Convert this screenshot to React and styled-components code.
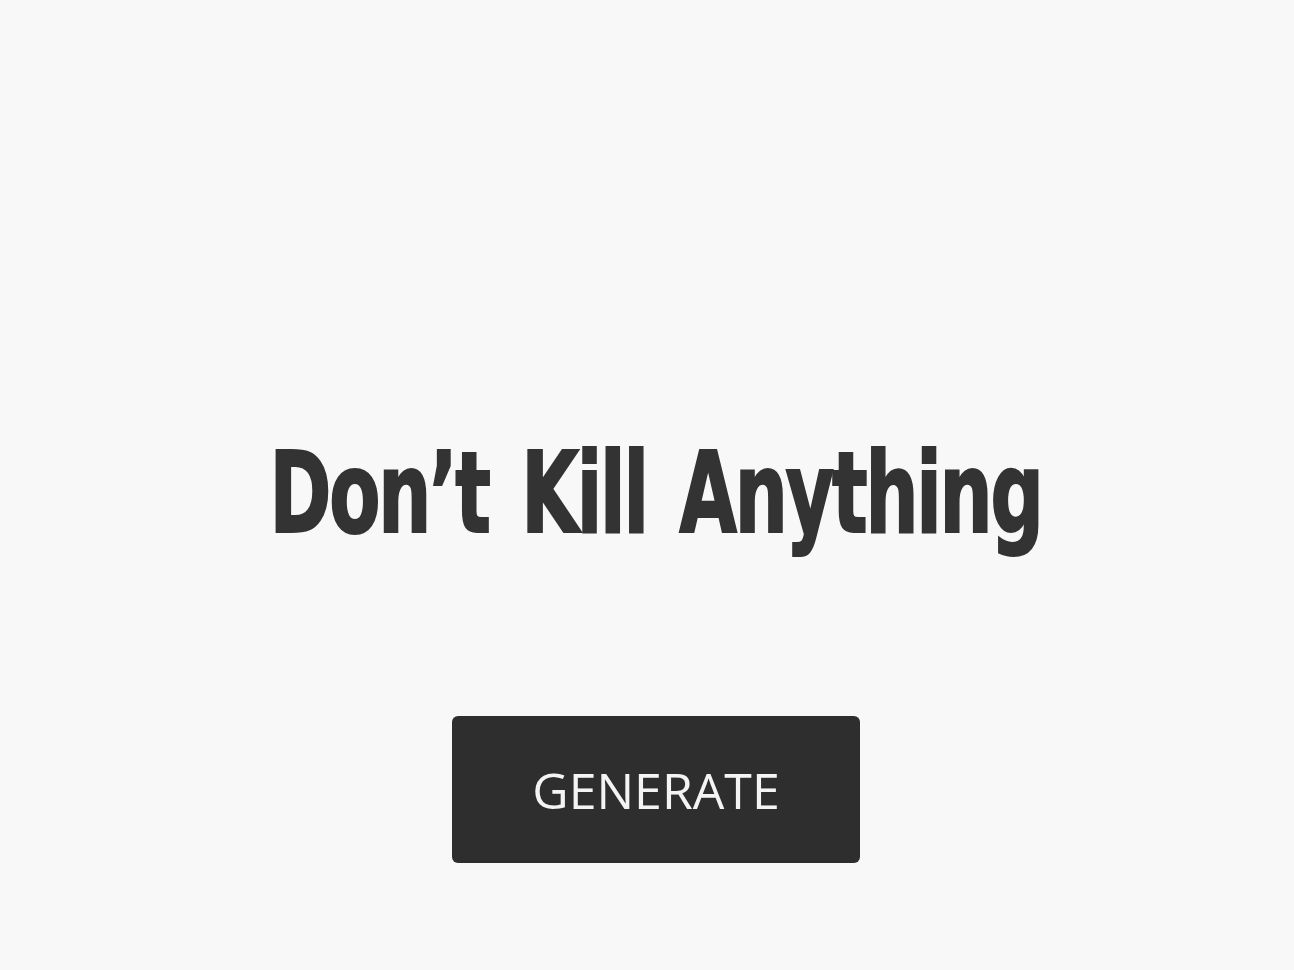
import React from "react";
import styled, { createGlobalStyle } from "styled-components";

const GlobalStyle = createGlobalStyle`
  html, body {
    margin: 0;
    padding: 0;
    background: #f8f8f8;
  }
  #root {
    min-height: 100vh;
  }
`;

const Page = styled.main`
  display: flex;
  flex-direction: column;
  align-items: center;
  padding: 437px 0 0 18px;
  min-height: 100vh;
  box-sizing: border-box;
  background: #f8f8f8;
`;

// Condensed headline face: no Oswald offline, so squeeze DejaVu Condensed
const Title = styled.h1`
  margin: 0;
  font-family: "DejaVu Sans Condensed", "Liberation Sans", sans-serif;
  font-weight: 700;
  font-size: 113px;
  line-height: 1;
  letter-spacing: -3px;
  word-spacing: 12px;
  color: #333333;
  -webkit-text-stroke: 2px #333333;
  white-space: nowrap;
  transform: scaleX(0.733);
  transform-origin: center;
`;

const GenerateButton = styled.button`
  margin-top: 166px;
  width: 408px;
  height: 147px;
  display: flex;
  align-items: center;
  justify-content: center;
  border: none;
  border-radius: 6px;
  background: #2e2e2e;
  color: #f4f4f4;
  font-family: "Open Sans", "Liberation Sans", sans-serif;
  font-size: 50px;
  font-weight: 400;
  cursor: pointer;
`;

export default function App() {
  return (
    <>
      <GlobalStyle />
      <Page>
        <Title>Don’t Kill Anything</Title>
        <GenerateButton>GENERATE</GenerateButton>
      </Page>
    </>
  );
}
